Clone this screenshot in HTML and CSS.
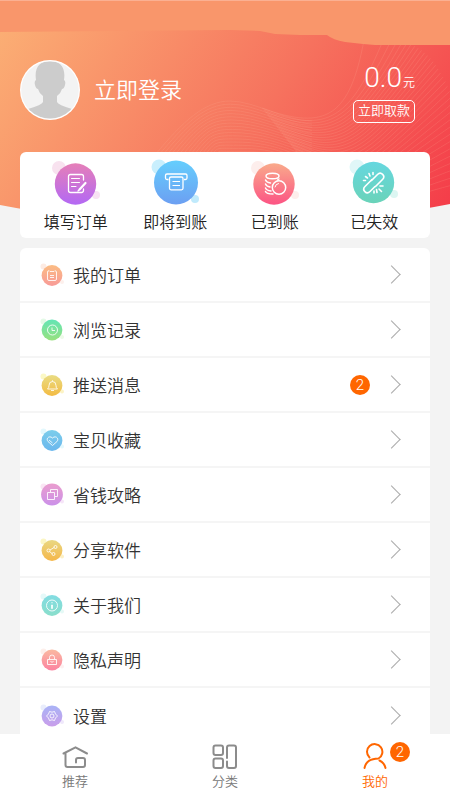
FILE: index.html
```html
<!DOCTYPE html>
<html lang="zh-CN">
<head>
<meta charset="utf-8">
<meta name="viewport" content="width=device-width, initial-scale=1">
<title>我的</title>
<link rel="stylesheet" href="styles.css">
</head>
<body>
<svg class="backdrop" viewBox="0 0 450 210" preserveAspectRatio="none" aria-hidden="true">
  <defs>
    <linearGradient id="heat" gradientUnits="userSpaceOnUse" x1="0" y1="30" x2="400" y2="300">
      <stop offset="0" stop-color="#fbae74"/><stop offset=".55" stop-color="#f6725e"/><stop offset="1" stop-color="#f43a48"/>
    </linearGradient>
    <clipPath id="arc"><path d="M0 0H450V204Q225 248 0 205Z"/></clipPath>
  </defs>
  <g clip-path="url(#arc)">
    <rect width="450" height="240" fill="url(#heat)"/>
    <g id="waves" fill="none" stroke="#ffb8a0" stroke-opacity=".2" stroke-width=".8"></g>
    <path d="M0 0H450V45H375L363 44 345 42Q333 40 327 35L300 35 275 34 260 31 230 30 110 31 0 32Z" fill="#f9966b"/>
    <path d="M0 .5H450" stroke="#fbb092"/>
  </g>
</svg>

<main class="page">
  <header class="profile">
    <svg class="avatar" viewBox="0 0 60 60" aria-hidden="true">
      <clipPath id="face"><circle cx="30" cy="30" r="28.5"/></clipPath>
      <circle cx="30" cy="30" r="30" fill="#fff"/><circle cx="30" cy="30" r="28.8" fill="#f3f3f3"/>
      <path clip-path="url(#face)" fill="#ccc" d="M16 20C14 7 20 1 30 1S46 7 44 20Q46 21 45 25T42 29Q41 33 37 36V42Q38 45 52 49L56 60H4L8 49Q22 45 23 42V36Q19 33 18 29 16 29 15 25T16 20Z"/>
    </svg>
    <a class="login" href="#login">立即登录</a>
    <div class="balance">
      <p class="amount">0.0<small>元</small></p>
      <button class="withdraw" type="button">立即取款</button>
    </div>
  </header>

  <nav class="card quick" aria-label="订单">
    <a href="#write">
      <svg viewBox="0 0 52 46" aria-hidden="true">
        <linearGradient id="q1" x2="0" y2="1"><stop stop-color="#e57fb8"/><stop offset="1" stop-color="#b368f4"/></linearGradient>
        <circle cx="9" cy="10" r="7" fill="#f8e2ef"/><circle cx="46" cy="37" r="4" fill="#f8e2f3"/><circle cx="25.5" cy="26" r="20.7" fill="url(#q1)"/>
        <g fill="none" stroke="#fff" stroke-width="1.3" stroke-linecap="round" stroke-linejoin="round"><path d="M33.5 22V18.5Q33.5 16.500 31.500 16.500H20.500Q18.500 16.500 18.500 18.500V32.500Q18.500 34.500 20.500 34.500H31.500Q33.500 34.500 33.500 32V31"/><path d="M21.500 20.500H29.500M21.500 24.500H29.500M21.500 28.500H26" stroke-width="1"/><path d="M35.500 25 29.500 31.500" stroke-width="2.200"/><path d="M28.800 32.300 28 33"/></g>
      </svg>
      <span>填写订单</span>
    </a>
    <a href="#pending">
      <svg viewBox="0 0 52 46" aria-hidden="true">
        <linearGradient id="q2" x2="0" y2="1"><stop stop-color="#65cefd"/><stop offset="1" stop-color="#6c9ff2"/></linearGradient>
        <circle cx="10" cy="9" r="7.500" fill="#c9effd"/><circle cx="46" cy="41" r="4" fill="#c0eafc"/><circle cx="27" cy="24.500" r="22" fill="url(#q2)"/>
        <g fill="none" stroke="#fff" stroke-width="1.300" stroke-linejoin="round"><path d="M19.500 21.500H18Q16.500 21.500 16.500 20V17.500Q16.500 16 18 16H36.500Q38 16 38 17.500V20Q38 21.500 36.500 21.500H35"/><rect x="20.500" y="19" width="13.500" height="12.800" rx="1.500"/><path d="M23.500 23.500H31M23.500 27.500H31" stroke-width="1.100"/></g>
      </svg>
      <span>即将到账</span>
    </a>
    <a href="#received">
      <svg viewBox="0 0 52 46" aria-hidden="true">
        <linearGradient id="q3" x2="0" y2="1"><stop stop-color="#f9aa8b"/><stop offset="1" stop-color="#fc5484"/></linearGradient>
        <circle cx="9" cy="10" r="7" fill="#fdeeec"/><circle cx="46" cy="37" r="4" fill="#fdeeec"/><circle cx="25" cy="26" r="20.700" fill="url(#q3)"/>
        <g fill="none" stroke="#fff" stroke-width="1.500" stroke-linecap="round"><ellipse cx="23.500" cy="18" rx="6.500" ry="2.800"/><path d="M16.500 22Q17.500 24.500 21.500 25M16.500 26Q17.500 28.500 21 29M16.500 30Q17.500 32.500 22 33M16.500 33.500Q17.500 36 24 36M28.500 22 30 21"/><circle cx="30" cy="29.500" r="6.700"/><path d="M26 29Q26.500 26 29.500 25.500" stroke-width="1"/></g>
      </svg>
      <span>已到账</span>
    </a>
    <a href="#invalid">
      <svg viewBox="0 0 52 46" aria-hidden="true">
        <linearGradient id="q4" x2="0" y2="1"><stop stop-color="#66d7df"/><stop offset="1" stop-color="#6ad3b9"/></linearGradient>
        <circle cx="9" cy="9" r="7.500" fill="#e0f7f8"/><circle cx="46" cy="36" r="4" fill="#dcf6f2"/><circle cx="25.500" cy="24.500" r="20.700" fill="url(#q4)"/>
        <g fill="none" stroke="#fff" stroke-width="1.600" stroke-linecap="round"><path d="M23.500 22.500 29.500 16.500C33 13 38 18 34.500 21.500L27.500 28.500"/><path d="M27 28.500 22 33.500C18.500 37 13.500 32 17 28.500L24 21.500"/><path d="M17.500 18.500 19.500 20M21 15.500 22 18M15.500 22.500 17.500 22.500M25 14.500V16.500M32 28H35M31 31 33.500 33.500M28.500 31.500 29 34.500M26 33V35"/></g>
      </svg>
      <span>已失效</span>
    </a>
  </nav>

  <nav class="card menu" aria-label="菜单">
    <a href="#orders"><svg class="mark" viewBox="0 0 24 24" aria-hidden="true"><linearGradient id="m1" x2="0" y2="1"><stop stop-color="#fbbc83"/><stop offset="1" stop-color="#f89b98"/></linearGradient><circle cx="3.500" cy="3.500" r="3" fill="#fdebe3"/><circle cx="22" cy="19" r="2" fill="#fdf0ec"/><circle cx="12" cy="12.500" r="10.400" fill="url(#m1)"/><path class="line" d="M9 8H8Q7.500 8 7.500 9V16Q7.500 17.500 9 17.500H15Q16.500 17.500 16.500 16V9Q16.500 8 15.500 8H15M9 7.500 10 8.500H14L15 7.500M10 12.500H14M10 14.500H14"/></svg><span>我的订单</span><i class="arrow"></i></a>
    <a href="#history"><svg class="mark" viewBox="0 0 24 24" aria-hidden="true"><linearGradient id="m2" x2="0" y2="1"><stop stop-color="#63e5b5"/><stop offset="1" stop-color="#98e17f"/></linearGradient><circle cx="3.500" cy="3.500" r="3" fill="#e4fae7"/><circle cx="22" cy="19" r="2" fill="#edfae8"/><circle cx="12" cy="12" r="10.400" fill="url(#m2)"/><circle class="line" cx="12.500" cy="12" r="5"/><path class="line" d="M12 9.500V12.500H15"/></svg><span>浏览记录</span><i class="arrow"></i></a>
    <a href="#messages"><svg class="mark" viewBox="0 0 24 24" aria-hidden="true"><linearGradient id="m3" x2="0" y2="1"><stop stop-color="#e9dc83"/><stop offset="1" stop-color="#f3bb43"/></linearGradient><circle cx="3.500" cy="3.500" r="3" fill="#fbf8c6"/><circle cx="22" cy="18.500" r="2" fill="#fcf3c5"/><circle cx="12" cy="12.500" r="10.400" fill="url(#m3)"/><path class="line" d="M7.500 16Q9 15 9 12.500 9 8.500 12.500 8.500T16 12.500Q16 15 17.500 16ZM12.500 7.300V8.500M11 17.500H14"/></svg><span>推送消息</span><b class="badge">2</b><i class="arrow"></i></a>
    <a href="#favorites"><svg class="mark" viewBox="0 0 24 24" aria-hidden="true"><linearGradient id="m4" x2="0" y2="1"><stop stop-color="#7bcdeb"/><stop offset="1" stop-color="#6bb7ed"/></linearGradient><circle cx="3.500" cy="3.500" r="3" fill="#e3f8fd"/><circle cx="22" cy="18.500" r="2" fill="#e3f8fd"/><circle cx="12" cy="12.500" r="10.400" fill="url(#m4)"/><path class="line" d="M12.500 17.500 8 13.500C5.500 10.500 9.500 7 12.500 10 15.500 7 19.500 10.500 17 13.500ZM9 12 12.500 15"/></svg><span>宝贝收藏</span><i class="arrow"></i></a>
    <a href="#tips"><svg class="mark" viewBox="0 0 24 24" aria-hidden="true"><linearGradient id="m5" x2="0" y2="1"><stop stop-color="#ea9dce"/><stop offset="1" stop-color="#cb91e9"/></linearGradient><circle cx="3.500" cy="3.500" r="3" fill="#fae6f4"/><circle cx="22" cy="18.500" r="2" fill="#f6e5f8"/><circle cx="12" cy="11.500" r="10.900" fill="url(#m5)"/><path class="line" d="M7.500 9.500H14.500V16.500H7.500ZM10.500 9V6.500H17.500V13.500H15"/></svg><span>省钱攻略</span><i class="arrow"></i></a>
    <a href="#share"><svg class="mark" viewBox="0 0 24 24" aria-hidden="true"><linearGradient id="m6" x2="0" y2="1"><stop stop-color="#e9d782"/><stop offset="1" stop-color="#f5b74a"/></linearGradient><circle cx="3.500" cy="3.500" r="3" fill="#fbf6c4"/><circle cx="22" cy="18.500" r="2" fill="#fcf0c5"/><circle cx="12" cy="12.500" r="10.400" fill="url(#m6)"/><circle class="line" cx="8.500" cy="12.500" r="1.500"/><circle class="line" cx="15.500" cy="9" r="1.500"/><circle class="line" cx="13.500" cy="16" r="1.500"/><path class="line" d="M10 12 14 9.500M9.500 13.500 12 15.500"/></svg><span>分享软件</span><i class="arrow"></i></a>
    <a href="#about"><svg class="mark" viewBox="0 0 24 24" aria-hidden="true"><linearGradient id="m7" x2="0" y2="1"><stop stop-color="#82dce2"/><stop offset="1" stop-color="#8adecb"/></linearGradient><circle cx="3.500" cy="3.500" r="3" fill="#e5f9f9"/><circle cx="22" cy="18.500" r="2" fill="#e5f9f6"/><circle cx="12" cy="12.500" r="10.400" fill="url(#m7)"/><circle class="line" cx="12" cy="12.500" r="5.500"/><path class="line" d="M12 9V10.300M11.500 12H12.500V15.500H11.500Z"/></svg><span>关于我们</span><i class="arrow"></i></a>
    <a href="#privacy"><svg class="mark" viewBox="0 0 24 24" aria-hidden="true"><linearGradient id="m8" x2="0" y2="1"><stop stop-color="#fab9a1"/><stop offset="1" stop-color="#fc83a0"/></linearGradient><circle cx="3.500" cy="3.500" r="3" fill="#fdefeb"/><circle cx="22" cy="18.500" r="2" fill="#fdf0f0"/><circle cx="12" cy="12" r="10.400" fill="url(#m8)"/><path class="line" d="M7.500 11.500H16.500V16.500H7.500ZM9.500 11V9.500Q9.500 7 12 7T14.500 9.500V11M10.500 13 12 14.500 13.500 13"/></svg><span>隐私声明</span><i class="arrow"></i></a>
    <a href="#settings"><svg class="mark" viewBox="0 0 24 24" aria-hidden="true"><linearGradient id="m9" x2="0" y2="1"><stop stop-color="#a9b3f6"/><stop offset="1" stop-color="#c99eea"/></linearGradient><circle cx="3.500" cy="3.500" r="3" fill="#e9edfc"/><circle cx="22" cy="18" r="2" fill="#efe8fb"/><circle cx="12" cy="12" r="10.400" fill="url(#m9)"/><path class="line" d="M9.500 7.500 12 8.200 14.500 7.500 15.500 10 17.500 12 15.500 14 14.500 16.500 12 15.800 9.500 16.500 8.500 14 6.500 12 8.500 10Z"/><circle class="line" cx="12" cy="12" r="2"/></svg><span>设置</span><i class="arrow"></i></a>
  </nav>
</main>

<nav class="tabs" aria-label="主导航">
  <a href="#recommend">
    <svg viewBox="0 0 28 28" aria-hidden="true"><path d="M26 10.500 14.500 4.300 2.500 10.500M4.500 10V22Q4.500 24 6.500 24H22Q24 24 24 22V17Q24 15 22 15H17Q15 15 15 17V19.500"/></svg>
    <span>推荐</span>
  </a>
  <a href="#category">
    <svg viewBox="0 0 28 28" aria-hidden="true"><rect x="2.500" y="2.500" width="9.500" height="9.500" rx="2"/><rect x="2.500" y="15.500" width="9.500" height="9.500" rx="2"/><path d="M16 15V4.500Q16 2.500 18 2.500H23Q25 2.500 25 4.500V23Q25 25 23 25H18Q16 25 16 23V18.500"/></svg>
    <span>分类</span>
  </a>
  <a class="active" href="#mine" aria-current="page">
    <svg viewBox="0 0 28 28" aria-hidden="true"><path d="M8.500 14.500A7.700 7.700 0 1 1 17.500 15.500C10 16 5 17.500 3.500 25M18.500 17.500Q23.500 20 24.500 25"/></svg>
    <span>我的</span>
    <b class="badge">2</b>
  </a>
</nav>
<script src="waves.js"></script>
</body>
</html>
```
FILE: waves.js
```js
// Draws the two families of fine wave lines on the header backdrop.
const group = document.getElementById("waves");

function addLine(d) {
  const path = document.createElementNS("http://www.w3.org/2000/svg", "path");
  path.setAttribute("d", d);
  group.appendChild(path);
}

// Left hill: arcs that rise from the lower left and fall into the crossing.
for (let i = 0; i < 20; i++) {
  const t = i / 19;
  const sx = 155 + 50 * t, sy = 155 + 30 * t;
  const px = 230 + 5 * t, py = 101 + 60 * t;
  addLine(`M${sx} ${sy}C${sx + 28} ${sy - 34} ${px - 25} ${py} ${px} ${py}` +
    `S${285 - 10 * t} ${121 + 35 * t} ${312} ${121 + 60 * t}`);
}

// Right sweep: curves that leave the hill and fan out to the right edge.
for (let i = 0; i < 34; i++) {
  const s = i / 33;
  const sx = 262 + 50 * s, sy = 108 + 64 * s;
  const ex = 364 + 110 * Math.sqrt(s), ey = 40 + 140 * s * s;
  addLine(`M${sx} ${sy}C${sx + 65} ${sy + 24 + 30 * s} ${350 + 30 * s} ${115 + 85 * s} ${ex} ${ey}`);
}
```
FILE: styles.css
```css
* {
  box-sizing: border-box;
}

body {
  margin: 0;
  min-height: 100vh;
  position: relative;
  background: #f3f3f3;
  color: #222;
  font-family: Roboto, "Noto Sans CJK SC", sans-serif;
  font-weight: 350;
}

a {
  color: inherit;
  text-decoration: none;
}

.backdrop {
  position: absolute;
  top: 0;
  left: 0;
  width: 100%;
  height: 210px;
}

.page {
  position: relative;
  padding: 60px 20px 56px;
}

.profile {
  display: flex;
  align-items: center;
  height: 60px;
  margin-bottom: 32px;
  color: #fff;
}

.avatar {
  width: 60px;
  height: 60px;
}

.login {
  margin-left: 14px;
  padding-top: 2px;
  font-size: 22px;
  line-height: 32px;
}

.balance {
  display: flex;
  flex-direction: column;
  align-items: flex-end;
  margin-left: auto;
  padding-right: 15px;
}

.amount {
  margin: 0;
  padding-top: 3px;
  font-size: 28px;
  line-height: 34px;
}

.amount small {
  margin-left: 1px;
  font-size: 12px;
}

.withdraw {
  height: 23px;
  padding: 0 4px;
  border: 1px solid #fff;
  border-radius: 5px;
  background: none;
  color: #fff;
  font: inherit;
  font-size: 13px;
  line-height: 20px;
}

.card {
  border-radius: 6px;
  background: #fff;
}

.quick {
  display: grid;
  grid-template-columns: repeat(4, 1fr);
  padding: 6px 6px 3px;
  margin-bottom: 10px;
}

.quick a {
  display: flex;
  flex-direction: column;
  align-items: center;
  font-size: 16px;
  line-height: 24px;
}

.quick svg {
  width: 52px;
  height: 46px;
  margin-bottom: 7px;
  overflow: visible;
}

.menu a {
  display: flex;
  align-items: center;
  height: 55px;
  padding: 0 32px 0 20px;
  border-bottom: 2px solid #f5f5f5;
  color: #333;
  font-size: 17px;
}

.menu a:last-child {
  border-bottom: 0;
}

.mark {
  width: 24px;
  height: 24px;
  margin-right: 9px;
}

.line {
  fill: none;
  stroke: #fff;
  stroke-opacity: .85;
  stroke-width: 1;
  stroke-linejoin: round;
}

.menu span {
  flex: 1;
}

.arrow {
  width: 13px;
  height: 13px;
  border: solid #aaa;
  border-width: 1px 1px 0 0;
  transform: rotate(45deg);
}

.badge {
  width: 20px;
  height: 20px;
  border-radius: 50%;
  background: #ff6600;
  color: #fff;
  font-size: 15px;
  font-weight: 350;
  line-height: 21px;
  text-align: center;
}

.menu .badge {
  margin-right: 15px;
}

.tabs {
  position: fixed;
  right: 0;
  bottom: 0;
  left: 0;
  display: grid;
  grid-template-columns: repeat(3, 1fr);
  height: 66px;
  padding-top: 9px;
  background: #fff;
  color: #777;
  font-size: 13px;
  line-height: 21px;
}

.tabs a {
  position: relative;
  display: flex;
  flex-direction: column;
  align-items: center;
}

.tabs svg {
  width: 28px;
  height: 28px;
  fill: none;
  stroke: #8c8c8c;
  stroke-width: 2;
  stroke-linecap: round;
  stroke-linejoin: round;
}

.tabs .active {
  color: #ff6600;
}

.tabs .active svg {
  stroke: #ff6600;
}

.tabs .badge {
  position: absolute;
  top: -1px;
  left: 50%;
  margin-left: 15px;
}
```
